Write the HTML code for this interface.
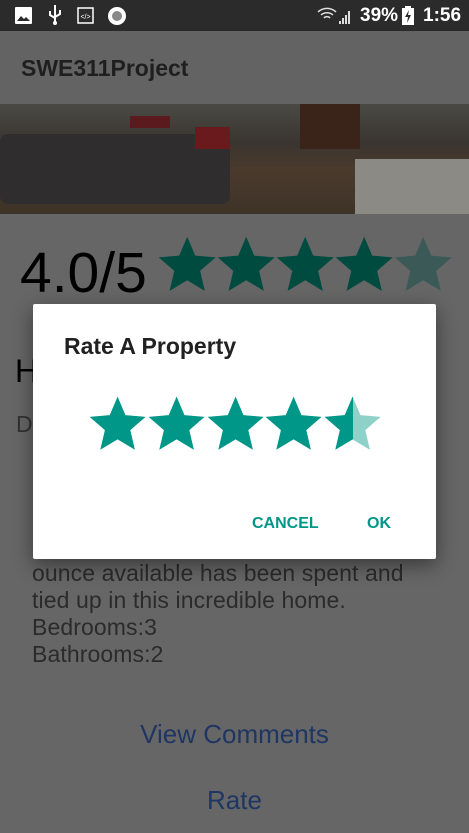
<!DOCTYPE html>
<html><head><meta charset="utf-8"><style>
*{margin:0;padding:0;box-sizing:border-box}
body{width:469px;height:833px;overflow:hidden;background:#666;font-family:"Liberation Sans",sans-serif;position:relative}
.abs{position:absolute}
#sb{left:0;top:0;width:469px;height:31px;background:#2b2b2b;color:#fff}
#ab{left:0;top:31px;width:469px;height:73px;background:#636363;box-shadow:0 2px 4px rgba(0,0,0,.3)}
#img{left:0;top:104px;width:469px;height:110px;background:linear-gradient(180deg,#4a4a44 0%,#3a3530 35%,#4a3a2c 60%,#3e3328 100%)}
.t{position:absolute;white-space:nowrap}
#dlg{left:33px;top:304px;width:403px;height:255px;background:#fff;border-radius:2px;box-shadow:0 6px 20px rgba(0,0,0,.45)}
</style></head><body>
<div id="sb" class="abs">
 <svg class="abs" style="left:15px;top:7px" width="18" height="18"><rect x="0" y="0" width="17" height="17" rx="1" fill="#fff"/><path d="M2 14l4-5 3 3 2-2 4 4z" fill="#2b2b2b"/></svg>
 <svg class="abs" style="left:48px;top:5px" width="14" height="20"><path d="M7 0v18M2 6v4l5 3M12 5v4l-5 3" stroke="#fff" stroke-width="2" fill="none"/><circle cx="7" cy="18" r="2" fill="#fff"/></svg>
 <svg class="abs" style="left:77px;top:7px" width="18" height="18"><rect x="1" y="1" width="15" height="15" fill="none" stroke="#fff" stroke-width="1.5"/><text x="8.5" y="12" font-size="7" fill="#fff" text-anchor="middle" font-family="Liberation Sans">&lt;/&gt;</text></svg>
 <svg class="abs" style="left:107px;top:6px" width="20" height="20"><circle cx="10" cy="10" r="9" fill="#fff"/><circle cx="10" cy="10" r="5" fill="#888"/></svg>
 <svg class="abs" style="left:316px;top:6px" width="40" height="20"><path d="M2 6a13 13 0 0 1 18 0M5 9a9 9 0 0 1 12 0M8 12a4 4 0 0 1 6 0" stroke="#ddd" stroke-width="1.5" fill="none"/><path d="M23 18h2v-3h-2zM26 18h2v-6h-2zM29 18h2v-9h-2zM32 18h2v-13h-2z" fill="#ddd"/></svg>
 <div class="t" style="left:360px;top:5px;font-size:19px;color:#fff;font-weight:bold">39%</div>
 <svg class="abs" style="left:402px;top:6px" width="14" height="20"><rect x="3" y="0" width="6" height="2" fill="#fff"/><rect x="0" y="2" width="12" height="17" fill="#fff"/><path d="M7 4l-4 7h3l-1 6 4-8h-3z" fill="#2b2b2b"/></svg>
 <div class="t" style="left:423px;top:5px;font-size:19px;color:#fff;font-weight:bold">1:56</div>
</div>
<div id="ab" class="abs"><div class="t" style="left:21px;top:24px;font-size:23px;color:#1f1f1f;font-weight:bold">SWE311Project</div></div>
<div id="img" class="abs">
 <div class="abs" style="left:0;top:30px;width:230px;height:70px;background:#2f2d2d;border-radius:8px"></div>
 <div class="abs" style="left:130px;top:12px;width:40px;height:12px;background:#5a1a1e"></div>
 <div class="abs" style="left:195px;top:23px;width:35px;height:22px;background:#6a1a1c"></div>
 <div class="abs" style="left:300px;top:0px;width:60px;height:45px;background:#3a2318"></div>
 <div class="abs" style="left:355px;top:55px;width:114px;height:55px;background:#8c8a84"></div>
</div>
<div class="t" style="left:20px;top:240px;font-size:57px;color:#000">4.0/5</div>
<svg class="abs" style="left:155px;top:230px" width="310" height="70" viewBox="0 0 310 70">
 <defs><path id="s" d="M12 17.27L18.18 21l-1.64-7.03L22 9.24l-7.19-.61L12 2 9.19 8.63 2 9.24l5.46 4.73L5.82 21z"/></defs>
 <use href="#s" transform="translate(-2,1) scale(2.85)" fill="#004b40"/>
 <use href="#s" transform="translate(57,1) scale(2.85)" fill="#004b40"/>
 <use href="#s" transform="translate(116,1) scale(2.85)" fill="#004b40"/>
 <use href="#s" transform="translate(175,1) scale(2.85)" fill="#004b40"/>
 <use href="#s" transform="translate(234,1) scale(2.85)" fill="#3b5a57"/>
</svg>
<div class="t" style="left:15px;top:353px;font-size:32px;color:#000">H</div>
<div class="t" style="left:16px;top:411px;font-size:23px;color:#333">D</div>
<div class="t" style="left:32px;top:560px;font-size:23px;color:#2b2b2b;line-height:27px;letter-spacing:0.1px">ounce available has been spent and<br>tied up in this incredible home.<br>Bedrooms:3<br>Bathrooms:2</div>
<div class="t" style="left:0;width:469px;text-align:center;top:719px;font-size:26px;color:#1f3562">View Comments</div>
<div class="t" style="left:0;width:469px;text-align:center;top:785px;font-size:26px;color:#1f3562">Rate</div>
<div id="dlg" class="abs">
 <div class="t" style="left:31px;top:29px;font-size:23px;color:#212121;font-weight:bold">Rate A Property</div>
 <svg class="abs" style="left:52px;top:90px" width="310" height="70" viewBox="0 0 310 70">
  <defs><path id="d" d="M12 17.27L18.18 21l-1.64-7.03L22 9.24l-7.19-.61L12 2 9.19 8.63 2 9.24l5.46 4.73L5.82 21z"/><clipPath id="h"><rect x="0" y="0" width="268" height="70"/></clipPath></defs>
  <use href="#d" transform="translate(-1,-3) scale(2.8)" fill="#009688"/>
  <use href="#d" transform="translate(58,-3) scale(2.8)" fill="#009688"/>
  <use href="#d" transform="translate(117,-3) scale(2.8)" fill="#009688"/>
  <use href="#d" transform="translate(175,-3) scale(2.8)" fill="#009688"/>
  <use href="#d" transform="translate(234,-3) scale(2.8)" fill="#8ed1c8"/>
  <g clip-path="url(#h)"><use href="#d" transform="translate(234,-3) scale(2.8)" fill="#009688"/></g>
 </svg>
 <div class="t" style="left:219px;top:211px;font-size:16px;color:#009688;font-weight:bold">CANCEL</div>
 <div class="t" style="left:334px;top:211px;font-size:16px;color:#009688;font-weight:bold">OK</div>
</div>
</body></html>
